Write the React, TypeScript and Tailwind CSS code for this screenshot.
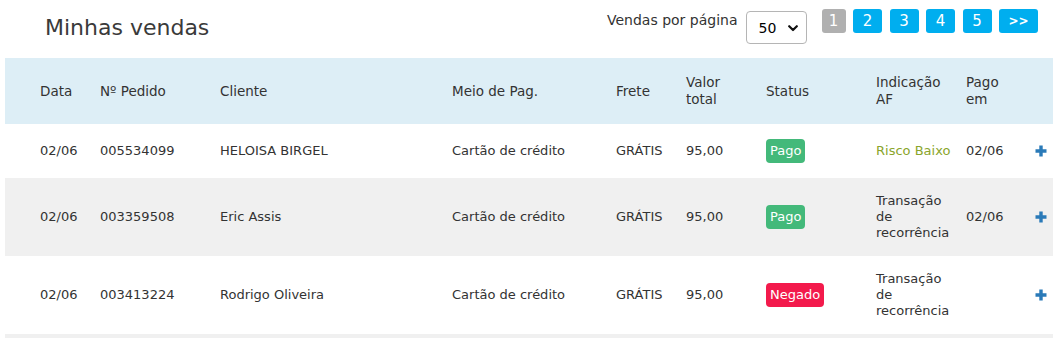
type Venda = {
  data: string
  pedido: string
  cliente: string
  meio: string
  frete: string
  valor: string
  status: 'Pago' | 'Negado'
  indicacao: 'baixo' | 'recorrencia'
  pagoEm: string
}

const vendas: Venda[] = [
  { data: '02/06', pedido: '005534099', cliente: 'HELOISA BIRGEL', meio: 'Cartão de crédito', frete: 'GRÁTIS', valor: '95,00', status: 'Pago', indicacao: 'baixo', pagoEm: '02/06' },
  { data: '02/06', pedido: '003359508', cliente: 'Eric Assis', meio: 'Cartão de crédito', frete: 'GRÁTIS', valor: '95,00', status: 'Pago', indicacao: 'recorrencia', pagoEm: '02/06' },
  { data: '02/06', pedido: '003413224', cliente: 'Rodrigo Oliveira', meio: 'Cartão de crédito', frete: 'GRÁTIS', valor: '95,00', status: 'Negado', indicacao: 'recorrencia', pagoEm: '' },
]

function Paginacao() {
  return (
    <div className="flex items-start">
      <span className="mt-[10px] text-[14px] text-[#333]">Vendas por página</span>
      <div className="relative ml-[8px] mt-[11px]">
        <select
          defaultValue="50"
          className="h-[33px] w-[61px] appearance-none rounded-[4px] border border-[#b5b5b5] bg-white pl-[12px] pt-[2px] text-[14px] text-black outline-none"
        >
          <option>10</option>
          <option>25</option>
          <option>50</option>
        </select>
        <svg className="pointer-events-none absolute right-[9px] top-[14px]" width="10" height="7" viewBox="0 0 10 7">
          <path d="M1.2 1.2 L5 5 L8.8 1.2" fill="none" stroke="#111" strokeWidth="2.2" strokeLinecap="round" strokeLinejoin="round" />
        </svg>
      </div>
      <div className="ml-[15px] mt-[9px] flex gap-[7.5px]">
        <button className="h-[24px] w-[24px] rounded-[3px] bg-[#b0b0b0] text-[15px] leading-[24px] text-white">1</button>
        {['2', '3', '4', '5'].map((n) => (
          <button key={n} className="h-[24px] w-[29px] rounded-[3px] bg-[#00aeef] text-[15px] leading-[24px] text-white">
            {n}
          </button>
        ))}
        <button className="h-[24px] w-[39px] rounded-[3px] bg-[#00aeef] text-[12px] font-bold leading-[24px] text-white">&gt;&gt;</button>
      </div>
    </div>
  )
}

function Badge({ status }: { status: Venda['status'] }) {
  return (
    <span
      className={
        status === 'Pago'
          ? 'inline-block h-[24px] rounded-[4px] bg-[#43b97a] px-[4px] text-[13px] leading-[24px] text-white'
          : 'inline-block h-[24px] rounded-[4px] bg-[#f31a4c] px-[4px] text-[13px] leading-[24px] text-white'
      }
    >
      {status}
    </span>
  )
}

function PlusIcon() {
  return (
    <svg width="12" height="12" viewBox="0 0 12 12" className="block">
      <path d="M6 0.5 V11.5 M0.5 6 H11.5" stroke="#2a7ab8" strokeWidth="3.4" />
    </svg>
  )
}

export default function App() {
  return (
    <div className="h-[338px] w-[1059px] overflow-hidden bg-white text-[#333]" style={{ fontFamily: '"DejaVu Sans", sans-serif' }}>
      <div className="flex h-[58px] items-start justify-between pl-[45px] pr-[21px]">
        <h1 className="mt-[14px] text-[22px] font-normal leading-[28px] text-[#3a3a3a]">Minhas vendas</h1>
        <Paginacao />
      </div>

      <table className="ml-[5px] w-[1048px] table-fixed border-collapse text-left text-[13px]">
        <colgroup>
          <col className="w-[95px]" />
          <col className="w-[120px]" />
          <col className="w-[232px]" />
          <col className="w-[164px]" />
          <col className="w-[70px]" />
          <col className="w-[80px]" />
          <col className="w-[110px]" />
          <col className="w-[90px]" />
          <col className="w-[64px]" />
          <col className="w-[23px]" />
        </colgroup>
        <thead>
          <tr className="h-[66px] bg-[#ddeef6] text-[13.5px] leading-[17px]">
            <th className="pl-[35px] font-normal">Data</th>
            <th className="font-normal">Nº Pedido</th>
            <th className="font-normal">Cliente</th>
            <th className="font-normal">Meio de Pag.</th>
            <th className="font-normal">Frete</th>
            <th className="font-normal">Valor<br />total</th>
            <th className="font-normal">Status</th>
            <th className="font-normal">Indicação<br />AF</th>
            <th className="font-normal">Pago<br />em</th>
            <th />
          </tr>
        </thead>
        <tbody className="leading-[16px]">
          {vendas.map((v, i) => (
            <tr key={v.pedido} className={i % 2 === 1 ? 'bg-[#f0f0f0]' : 'bg-white'}>
              <td className="py-[15px] pl-[35px]">{v.data}</td>
              <td className="py-[15px]">{v.pedido}</td>
              <td className="py-[15px]">{v.cliente}</td>
              <td className="py-[15px]">{v.meio}</td>
              <td className="py-[15px]">{v.frete}</td>
              <td className="py-[15px]">{v.valor}</td>
              <td className="py-[15px]">
                <Badge status={v.status} />
              </td>
              <td className="py-[15px]">
                {v.indicacao === 'baixo' ? (
                  <span className="text-[#8aa52c]">Risco Baixo</span>
                ) : (
                  <span>
                    Transação
                    <br />
                    de
                    <br />
                    recorrência
                  </span>
                )}
              </td>
              <td className="py-[15px]">{v.pagoEm}</td>
              <td className="py-[15px] pl-[5px]">
                <PlusIcon />
              </td>
            </tr>
          ))}
          <tr className="h-[40px] bg-[#f0f0f0]">
            <td colSpan={10} />
          </tr>
        </tbody>
      </table>
    </div>
  )
}
